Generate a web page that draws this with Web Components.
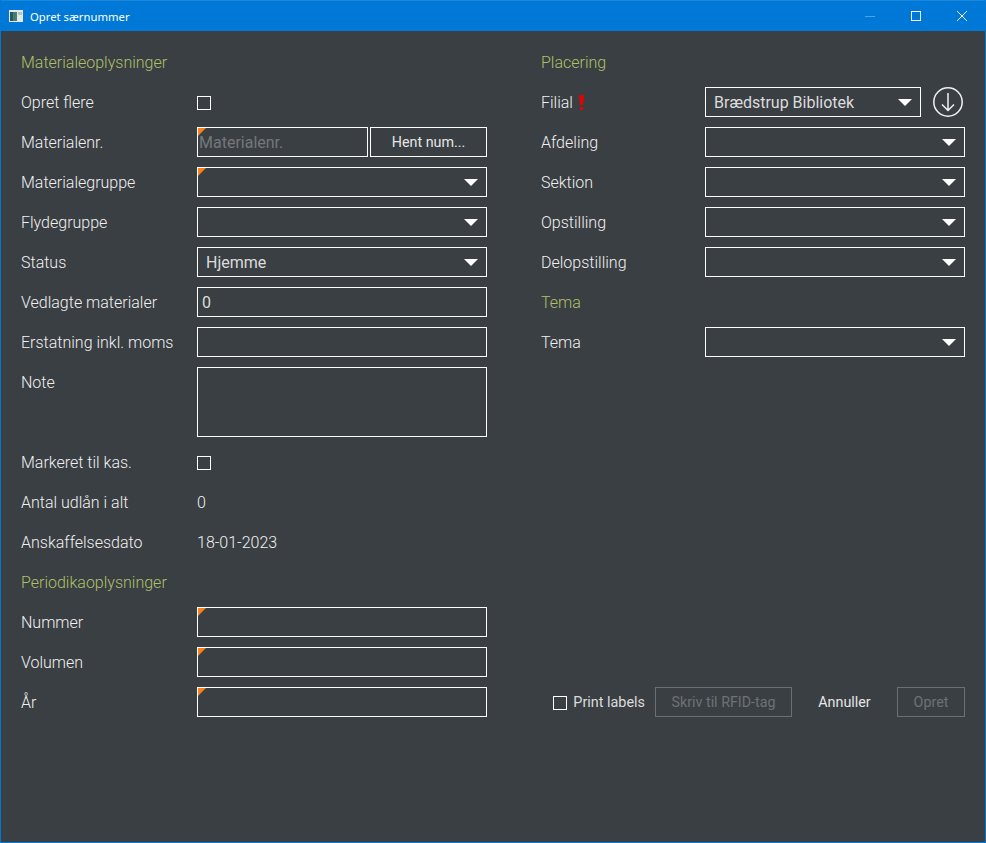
<!DOCTYPE html>
<html lang="da">
<head>
<meta charset="utf-8">
<title>Opret særnummer</title>
<style>
  html, body { margin: 0; height: 100%; background: #3a3f43; }
  body { font-family: Roboto, "Liberation Sans", sans-serif; font-size: 16px; font-weight: 300; color: #f0f0f0; }
  .col { display: flex; flex-direction: column; }
  .right { height: 680px; }
  .gap { flex: 1; }
</style>
</head>
<body>
<app-window caption="Opret særnummer">
  <div class="col">
    <form-heading>Materialeoplysninger</form-heading>
    <form-row label="Opret flere"><check-box></check-box></form-row>
    <form-row label="Materialenr.">
      <text-field marked placeholder="Materialenr." style="width:171px"></text-field>
      <flat-button style="width:117px;margin-left:2px">Hent num...</flat-button>
    </form-row>
    <form-row label="Materialegruppe"><drop-down marked></drop-down></form-row>
    <form-row label="Flydegruppe"><drop-down></drop-down></form-row>
    <form-row label="Status"><drop-down value="Hjemme"></drop-down></form-row>
    <form-row label="Vedlagte materialer"><text-field value="0"></text-field></form-row>
    <form-row label="Erstatning inkl. moms"><text-field></text-field></form-row>
    <form-row label="Note" tall><text-field tall></text-field></form-row>
    <form-row label="Markeret til kas."><check-box></check-box></form-row>
    <form-row label="Antal udlån i alt"><span>0</span></form-row>
    <form-row label="Anskaffelsesdato"><span>18-01-2023</span></form-row>
    <form-heading>Periodikaoplysninger</form-heading>
    <form-row label="Nummer"><text-field marked></text-field></form-row>
    <form-row label="Volumen"><text-field marked></text-field></form-row>
    <form-row label="År"><text-field marked></text-field></form-row>
  </div>
  <div class="col right">
    <form-heading>Placering</form-heading>
    <form-row wide label="Filial" required>
      <drop-down value="Brædstrup Bibliotek" style="width:216px"></drop-down>
      <round-arrow style="margin-left:12px"></round-arrow>
    </form-row>
    <form-row wide label="Afdeling"><drop-down></drop-down></form-row>
    <form-row wide label="Sektion"><drop-down></drop-down></form-row>
    <form-row wide label="Opstilling"><drop-down></drop-down></form-row>
    <form-row wide label="Delopstilling"><drop-down></drop-down></form-row>
    <form-heading>Tema</form-heading>
    <form-row wide label="Tema"><drop-down></drop-down></form-row>
    <div class="gap"></div>
    <action-bar>
      <check-box label="Print labels"></check-box>
      <flat-button disabled style="width:137px;margin-left:10px">Skriv til RFID-tag</flat-button>
      <flat-button plain style="width:79px;margin-left:13px">Annuller</flat-button>
      <flat-button disabled style="width:68px;margin-left:13px">Opret</flat-button>
    </action-bar>
  </div>
</app-window>

<script>
const CORNER = `
  .corner { position: absolute; left: 0; top: 0; width: 0; height: 0;
    border-top: 8px solid #f58220; border-right: 8px solid transparent; }
`;

class AppWindow extends HTMLElement {
  connectedCallback() {
    this.attachShadow({ mode: "open" }).innerHTML = `
      <style>
        :host { display: flex; flex-direction: column; box-sizing: border-box; height: 843px;
          border: 1px solid #0078d7; border-top: 0; background: #3a3f43; }
        .bar { display: flex; align-items: center; height: 31px; flex: none; background: #0078d7; border-top: 1px solid #1a86dc;
          box-sizing: border-box; color: #fff; font: 400 11.3px "Noto Sans", "Open Sans", sans-serif; }
        .app { margin: 0 7px 0 8px; display: block; }
        .title { flex: 1; }
        .btn { width: 46px; height: 30px; display: flex; align-items: center; justify-content: center; }
        .btn svg { display: block; }
        .body { display: grid; grid-template-columns: 520px 444px; padding: 11px 0 0 20px; }
      </style>
      <div class="bar">
        <svg class="app" width="14" height="12" viewBox="0 0 14 12">
          <rect width="14" height="12" fill="#e4e8e6"/>
          <rect x="1" y="2" width="7" height="9" fill="#3f8272"/>
          <rect x="1" y="2" width="3" height="9" fill="#2f5560"/>
          <rect x="9" y="2" width="4" height="3" fill="#b9c2c2"/>
        </svg>
        <span class="title">${this.getAttribute("caption")}</span>
        <span class="btn"><svg width="10" height="10"><rect y="5" width="10" height="1" fill="#4ea3e6"/></svg></span>
        <span class="btn"><svg width="10" height="10"><rect x=".5" y=".5" width="9" height="9" fill="none" stroke="#fff"/></svg></span>
        <span class="btn"><svg width="10" height="10"><path d="M0 0L10 10M10 0L0 10" stroke="#fff" fill="none"/></svg></span>
      </div>
      <div class="body"><slot></slot></div>`;
  }
}

class FormHeading extends HTMLElement {
  constructor() {
    super();
    this.attachShadow({ mode: "open" }).innerHTML = `
      <style>
        :host { display: flex; align-items: center; height: 40px; color: #afc068; }
      </style>
      <slot></slot>`;
  }
}

class FormRow extends HTMLElement {
  connectedCallback() {
    const wide = this.hasAttribute("wide");
    const mark = this.hasAttribute("required")
      ? `<svg class="req" width="5" height="15" viewBox="0 0 5 15"><path d="M0 0H5L4 10H1Z M1 12H4V15H1Z" fill="#e60000"/></svg>`
      : "";
    this.attachShadow({ mode: "open" }).innerHTML = `
      <style>
        :host { display: flex; height: ${this.hasAttribute("tall") ? 80 : 40}px; }
        .label { flex: none; width: ${wide ? 164 : 176}px; height: 40px; display: flex; align-items: center; }
        .req { margin-left: 6px; }
        .control { display: flex; align-items: center; height: ${this.hasAttribute("tall") ? 80 : 40}px; width: ${wide ? 260 : 290}px; }
      </style>
      <div class="label">${this.getAttribute("label")}${mark}</div>
      <div class="control"><slot></slot></div>`;
  }
}

class TextField extends HTMLElement {
  connectedCallback() {
    const val = this.getAttribute("value") || "";
    const ph = this.getAttribute("placeholder") || "";
    this.attachShadow({ mode: "open" }).innerHTML = `
      <style>
        ${CORNER}
        :host { display: flex; position: relative; box-sizing: border-box; width: 100%; height: ${this.hasAttribute("tall") ? 70 : 30}px;
          border: 1px solid #fff; padding: 0 1px; align-items: center; font-weight: 400; color: #dcdcdc; }
        .ph { color: #74787b; }
      </style>
      ${this.hasAttribute("marked") ? '<span class="corner"></span>' : ""}
      ${val ? `<span style="padding-left:3px">${val}</span>` : ph ? `<span class="ph">${ph}</span>` : ""}`;
  }
}

class DropDown extends HTMLElement {
  connectedCallback() {
    const val = this.getAttribute("value") || "";
    this.attachShadow({ mode: "open" }).innerHTML = `
      <style>
        ${CORNER}
        :host { display: flex; position: relative; box-sizing: border-box; width: 100%; height: 30px; flex: none;
          border: 1px solid #fff; align-items: center; padding: 0 8px; font-weight: 400; color: #dcdcdc; }
        .value { flex: 1; }
        .arrow { width: 0; height: 0; border: 7px solid transparent; border-top-color: #fff; border-bottom: 0; margin-top: 1px; }
      </style>
      ${this.hasAttribute("marked") ? '<span class="corner"></span>' : ""}
      <span class="value">${val}</span>
      <span class="arrow"></span>`;
  }
}

class CheckBox extends HTMLElement {
  connectedCallback() {
    const label = this.getAttribute("label");
    this.attachShadow({ mode: "open" }).innerHTML = `
      <style>
        :host { display: inline-flex; align-items: center; font-size: 14.4px; font-weight: 400; color: #dcdcdc; }
        .box { box-sizing: border-box; width: 14px; height: 14px; border: 1px solid #fff; margin-top: 1px; }
        .text { margin-left: 6px; }
      </style>
      <span class="box"></span>
      ${label ? `<span class="text">${label}</span>` : ""}`;
  }
}

class FlatButton extends HTMLElement {
  connectedCallback() {
    const off = this.hasAttribute("disabled");
    const plain = this.hasAttribute("plain");
    this.attachShadow({ mode: "open" }).innerHTML = `
      <style>
        :host { display: flex; flex: none; box-sizing: border-box; height: 30px; align-items: center; justify-content: center;
          font-size: 14.3px; font-weight: 400; border: 1px solid ${plain ? "transparent" : off ? "#6b6f72" : "#fff"}; color: ${off ? "#6e7275" : "#e6e6e6"}; }
      </style>
      <slot></slot>`;
  }
}

class RoundArrow extends HTMLElement {
  constructor() {
    super();
    this.attachShadow({ mode: "open" }).innerHTML = `
      <style>:host { display: block; width: 30px; height: 30px; flex: none; } svg { display: block; }</style>
      <svg width="30" height="30" viewBox="0 0 30 30" fill="none" stroke="#f2f2f2">
        <circle cx="15" cy="15" r="14.2" stroke-width="1.5"/>
        <path d="M15 6V23.5M9 17.5L15 23.5L21 17.5" stroke-width="1.5"/>
      </svg>`;
  }
}

class ActionBar extends HTMLElement {
  constructor() {
    super();
    this.attachShadow({ mode: "open" }).innerHTML = `
      <style>:host { display: flex; align-items: center; justify-content: flex-end; height: 40px; width: 424px; }</style>
      <slot></slot>`;
  }
}

customElements.define("app-window", AppWindow);
customElements.define("form-heading", FormHeading);
customElements.define("form-row", FormRow);
customElements.define("text-field", TextField);
customElements.define("drop-down", DropDown);
customElements.define("check-box", CheckBox);
customElements.define("flat-button", FlatButton);
customElements.define("round-arrow", RoundArrow);
customElements.define("action-bar", ActionBar);
</script>
</body>
</html>
